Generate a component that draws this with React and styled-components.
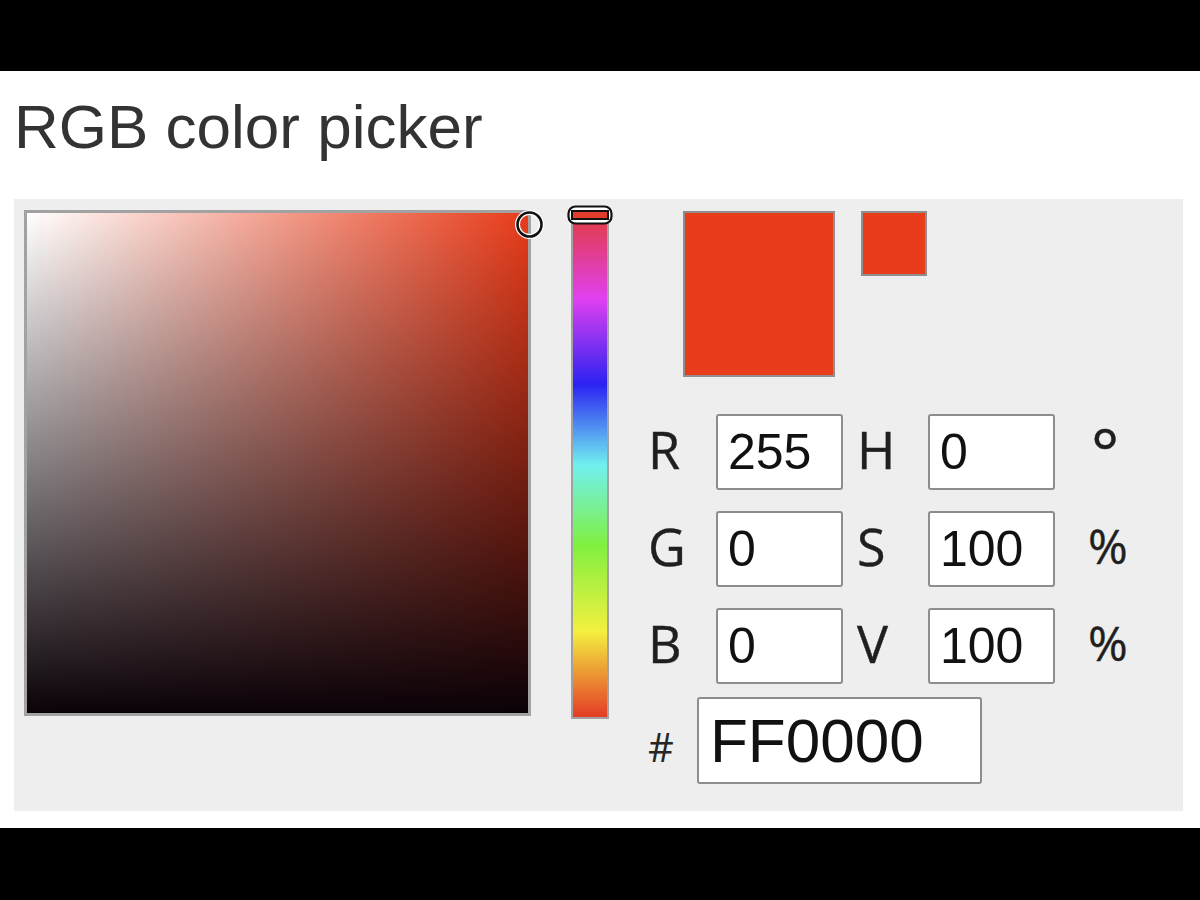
import React from "react";
import styled, { createGlobalStyle } from "styled-components";

const Global = createGlobalStyle`
  html, body { margin: 0; padding: 0; background: #000; }
  * { box-sizing: border-box; }
`;

const HUE_RED = "#e83c1a";

const Frame = styled.div`
  width: 1200px;
  height: 900px;
  background: #000;
  padding-top: 71px;
`;

const Page = styled.div`
  background: #fff;
  height: 757px;
  padding: 20px 17px 0 14px;
`;

const Title = styled.h1`
  margin: 0 0 37px 0;
  font-family: "Liberation Sans", Arial, sans-serif;
  font-weight: normal;
  font-size: 62px;
  line-height: 71px;
  color: #333;
`;

const Panel = styled.div`
  background: #eeeeee;
  display: flex;
  align-items: flex-start;
  padding: 11px 10px 27px 10px;
`;

const SVArea = styled.div`
  position: relative;
  width: 507px;
  height: 506px;
  border: 3px solid #a2a2a2;
  background:
    linear-gradient(to top, #0a0208, rgba(0, 0, 0, 0)),
    linear-gradient(to right, #ffffff, ${(p) => p.$hue});
`;

const SVMarker = styled.svg`
  position: absolute;
  right: -16px;
  top: -3px;
  width: 29px;
  height: 29px;
`;

const HueBar = styled.div`
  position: relative;
  margin-left: 40px;
  margin-top: 1px;
  width: 38px;
  height: 508px;
  border: 2px solid #a2a2a2;
  background: linear-gradient(
    to bottom,
    #e23c3c 0%,
    #e040f0 17%,
    #2b22f2 34%,
    #70f0f0 50%,
    #80f040 66%,
    #f4f040 83%,
    #e43c26 100%
  );
`;

const HueMarker = styled.svg`
  position: absolute;
  left: -6px;
  top: -8px;
  width: 46px;
  height: 20px;
`;

const RightCol = styled.div`
  margin-left: 39px;
  padding-top: 1px;
  display: flex;
  flex-direction: column;
`;

const SwatchRow = styled.div`
  display: flex;
  align-items: flex-start;
  gap: 26px;
  margin-left: 35px;
`;

const Swatch = styled.div`
  width: ${(p) => p.$w}px;
  height: ${(p) => p.$h}px;
  background: ${(p) => p.$color};
  border: 2px solid #8f8f8f;
`;

const FieldGrid = styled.div`
  margin-top: 37px;
  display: grid;
  grid-template-columns: 68px 127px 85px 127px auto;
  grid-auto-rows: 76px;
  row-gap: 21px;
  align-items: center;
`;

const Label = styled.span`
  font-family: "Open Sans", "Liberation Sans", sans-serif;
  font-size: ${(p) => p.$size || 52}px;
  color: #1f1f1f;
  line-height: 1;
  padding-left: ${(p) => p.$pad || 0}px;
  padding-bottom: 6px;
  align-self: ${(p) => (p.$top ? "start" : "center")};
  padding-top: ${(p) => (p.$top ? 4 : 0)}px;
  -webkit-text-stroke: 0.4px #1f1f1f;
`;

const NumBox = styled.input`
  width: 100%;
  height: 76px;
  margin: 0;
  border: 2px solid #8d8d8d;
  border-radius: 3px;
  background: #fff;
  padding: 0 0 0 10px;
  font-family: "Liberation Sans", Arial, sans-serif;
  font-size: 50px;
  color: #111;
  outline: none;
`;

const HexRow = styled.div`
  margin-top: 13px;
  display: flex;
  align-items: baseline;
`;

const HashLabel = styled.span`
  width: 49px;
  font-family: "Open Sans", "Liberation Sans", sans-serif;
  font-size: 40px;
  color: #262626;
`;

const HexBox = styled.input`
  width: 285px;
  height: 87px;
  margin: 0;
  border: 2px solid #8d8d8d;
  border-radius: 3px;
  background: #fff;
  padding: 0 0 0 11px;
  font-family: "Liberation Sans", Arial, sans-serif;
  font-size: 62px;
  color: #111;
  outline: none;
`;

const rows = [
  { a: "R", av: "255", b: "H", bv: "0", unit: "°" },
  { a: "G", av: "0", b: "S", bv: "100", unit: "%" },
  { a: "B", av: "0", b: "V", bv: "100", unit: "%" },
];

export default function App() {
  return (
    <Frame>
      <Global />
      <Page>
        <Title>RGB color picker</Title>
        <Panel>
          <SVArea $hue={HUE_RED}>
            <SVMarker viewBox="0 0 29 29">
              <circle cx="14.5" cy="14.5" r="12" fill="none" stroke="#fff" strokeWidth="5" />
              <circle cx="14.5" cy="14.5" r="12" fill="none" stroke="#111" strokeWidth="2.6" />
            </SVMarker>
          </SVArea>
          <HueBar>
            <HueMarker viewBox="0 0 46 20">
              <rect x="1.5" y="1.5" width="43" height="17" rx="7" fill="#fff" stroke="#111" strokeWidth="2.2" />
              <rect x="5" y="6" width="36" height="8" fill="#e23c2c" stroke="#111" strokeWidth="2" />
            </HueMarker>
          </HueBar>
          <RightCol>
            <SwatchRow>
              <Swatch $w={152} $h={166} $color={HUE_RED} />
              <Swatch $w={66} $h={65} $color={HUE_RED} />
            </SwatchRow>
            <FieldGrid>
              {rows.map((r) => (
                <React.Fragment key={r.a}>
                  <Label>{r.a}</Label>
                  <NumBox readOnly value={r.av} />
                  <Label $pad={14}>{r.b}</Label>
                  <NumBox readOnly value={r.bv} />
                  {r.unit === "°" ? (
                    <Label $pad={36} $size={66} $top>
                      {r.unit}
                    </Label>
                  ) : (
                    <Label $pad={33} $size={48}>
                      {r.unit}
                    </Label>
                  )}
                </React.Fragment>
              ))}
            </FieldGrid>
            <HexRow>
              <HashLabel>#</HashLabel>
              <HexBox readOnly value="FF0000" />
            </HexRow>
          </RightCol>
        </Panel>
      </Page>
    </Frame>
  );
}
